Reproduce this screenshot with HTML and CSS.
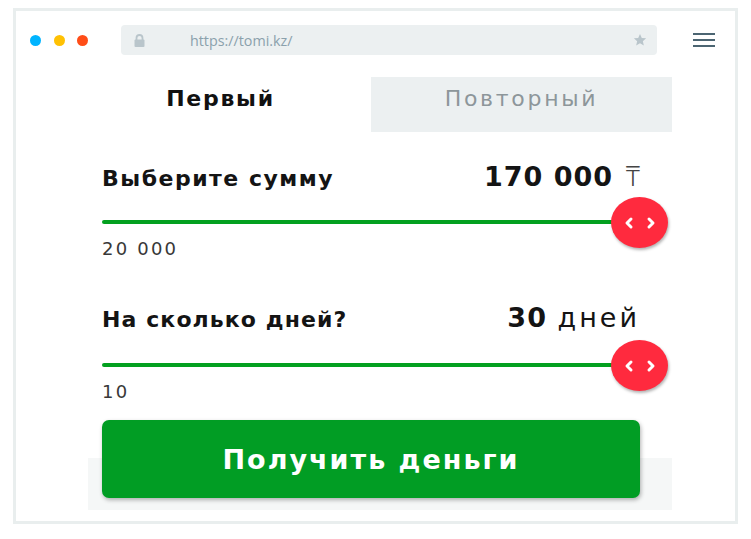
FILE: index.html
```html
<!DOCTYPE html>
<html lang="ru">
<head>
<meta charset="utf-8">
<title>tomi.kz</title>
<link rel="stylesheet" href="styles.css">
</head>
<body>
<div class="frame">
  <div class="toolbar">
    <div class="dots">
      <span class="dot dot-blue"></span>
      <span class="dot dot-yellow"></span>
      <span class="dot dot-red"></span>
    </div>
    <div class="urlbar">
      <svg class="lock" width="11" height="13" viewBox="0 0 11 13"><path d="M2.5 6V4a3 3 0 0 1 6 0v2" fill="none" stroke="#b9c5cb" stroke-width="1.8"/><rect x="0.5" y="5.5" width="10" height="7.5" rx="1" fill="#b9c5cb"/></svg>
      <span class="url">https://tomi.kz/</span>
      <svg class="star" width="14" height="14" viewBox="0 0 24 24"><path d="M12 1.5l3.1 7 7.4.6-5.6 4.9 1.7 7.3L12 17.4l-6.6 3.9 1.7-7.3L1.5 9.1l7.4-.6z" fill="#b9c5cb"/></svg>
    </div>
    <div class="burger"><span></span><span></span><span></span></div>
  </div>

  <div class="tabs">
    <div class="tab tab-active">Первый</div>
    <div class="tab tab-idle">Повторный</div>
  </div>

  <div class="content">
    <div class="field field-sum">
      <div class="field-head">
        <span class="field-label">Выберите сумму</span>
        <span class="field-value"><b>170 000</b> <span class="tenge">₸</span></span>
      </div>
      <div class="track">
        <div class="thumb">
          <svg width="36" height="14" viewBox="0 0 36 14"><polyline points="9,3 5,7 9,11" fill="none" stroke="#fff" stroke-width="3" stroke-linecap="round" stroke-linejoin="round"/><polyline points="27,3 31,7 27,11" fill="none" stroke="#fff" stroke-width="3" stroke-linecap="round" stroke-linejoin="round"/></svg>
        </div>
      </div>
      <div class="field-min">20 000</div>
    </div>

    <div class="field field-days">
      <div class="field-head">
        <span class="field-label">На сколько дней?</span>
        <span class="field-value"><b>30</b> <span class="unit">дней</span></span>
      </div>
      <div class="track">
        <div class="thumb">
          <svg width="36" height="14" viewBox="0 0 36 14"><polyline points="9,3 5,7 9,11" fill="none" stroke="#fff" stroke-width="3" stroke-linecap="round" stroke-linejoin="round"/><polyline points="27,3 31,7 27,11" fill="none" stroke="#fff" stroke-width="3" stroke-linecap="round" stroke-linejoin="round"/></svg>
        </div>
      </div>
      <div class="field-min">10</div>
    </div>

    <div class="cta">
      <button class="cta-button">Получить деньги</button>
    </div>
  </div>
</div>
</body>
</html>
```

FILE: styles.css
```css
* { box-sizing: border-box; }
html, body { margin: 0; padding: 0; background: #fff; }
body { font-family: "DejaVu Sans", "Noto Sans", sans-serif; color: #141414; }

.frame {
  margin: 8px 0 0 13px;
  width: 725px;
  height: 516px;
  border: 3px solid #e9eeee;
  background: #fff;
  position: relative;
}

.toolbar {
  display: flex;
  align-items: center;
  height: 30px;
  margin-top: 14px;
}
.dots { display: flex; gap: 12.5px; margin-left: 14px; }
.dot { width: 11px; height: 11px; border-radius: 50%; display: block; }
.dot-blue { background: #00b4ff; }
.dot-yellow { background: #ffc103; }
.dot-red { background: #ff4d17; }

.urlbar {
  margin-left: 33px;
  width: 536px;
  height: 30px;
  border-radius: 4px;
  background: #ecf0f1;
  display: flex;
  align-items: center;
  padding: 0 10px 0 13px;
}
.lock { display: block; }
.url {
  margin-left: 45px;
  font-family: "Open Sans", sans-serif;
  font-size: 14.3px;
  color: #8ba1ac;
  flex: 1;
}
.star { display: block; }

.burger {
  margin-left: 36px;
  width: 22px;
  display: flex;
  flex-direction: column;
  gap: 3.5px;
}
.burger span { display: block; height: 2.5px; background: #4c6572; }

.tabs {
  display: flex;
  margin: 22px 0 0 54px;
  width: 602px;
  height: 55px;
}
.tab {
  flex: 1;
  display: flex;
  align-items: center;
  justify-content: center;
  font-size: 22px;
  padding-bottom: 12px;
}
.tab-active { color: #111; font-weight: bold; letter-spacing: 1.7px; }
.tab-idle { background: #ecf0f1; color: #8d969a; letter-spacing: 2.7px; }

.content { margin-left: 86px; width: 538px; }

.field-head {
  display: flex;
  justify-content: space-between;
  align-items: baseline;
  height: 30px;
  line-height: 30px;
}
.field-sum { margin-top: 29px; }
.field-days { margin-top: 44px; }
.field-label { font-size: 22px; font-weight: bold; letter-spacing: 1.5px; }
.field-days .field-label { letter-spacing: 1.1px; }
.field-value { font-size: 27px; color: #141414; }
.field-value b { font-weight: bold; letter-spacing: 1px; }
.unit { letter-spacing: 3px; margin-left: 2px; }
.tenge { font-family: "Noto Sans", sans-serif; font-weight: 300; color: #444; margin-left: 4px; }

.track {
  position: relative;
  height: 4px;
  border-radius: 2px;
  background: #03a01f;
  margin-top: 29px;
}
.field-days .track { margin-top: 30px; }
.thumb {
  position: absolute;
  right: -28px;
  top: -23px;
  width: 57px;
  height: 51px;
  border-radius: 50%;
  background: #ff2a3e;
  box-shadow: 1px 2px 3px rgba(0,0,0,0.3);
  display: flex;
  align-items: center;
  justify-content: center;
}
.thumb svg { display: block; }

.field-min {
  margin-top: 15px;
  font-size: 18px;
  line-height: 20px;
  color: #383838;
  letter-spacing: 2.2px;
}

.cta { position: relative; margin-top: 18px; }
.cta::before {
  content: "";
  position: absolute;
  left: -14px;
  right: -32px;
  top: 38px;
  height: 52px;
  background: #f5f7f7;
}
.cta-button {
  position: relative;
  display: block;
  width: 538px;
  height: 78px;
  border: 0;
  border-radius: 7px;
  background: #019d24;
  color: #fff;
  font-family: "DejaVu Sans", sans-serif;
  font-size: 27px;
  font-weight: bold;
  letter-spacing: 2px;
  box-shadow: 1px 2px 4px rgba(0,0,0,0.3);
  cursor: pointer;
}
```
